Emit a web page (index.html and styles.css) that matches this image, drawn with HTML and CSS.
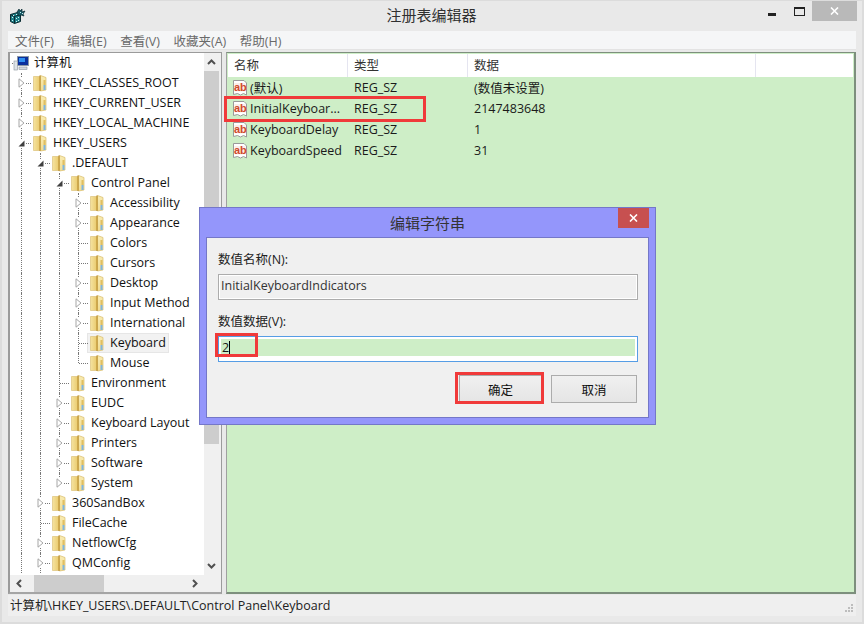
FILE: index.html
```html
<!DOCTYPE html>
<html lang="zh-CN">
<head>
<meta charset="utf-8">
<title>注册表编辑器</title>
<link rel="stylesheet" href="styles.css">
</head>
<body>
<svg class="defs" width="0" height="0">
  <defs>
    <linearGradient id="fl" x1="0" y1="0" x2="1" y2="0">
      <stop offset="0" stop-color="#f5e3a0"/>
      <stop offset="1" stop-color="#e9c868"/>
    </linearGradient>
    <linearGradient id="fr" x1="0" y1="0" x2="0" y2="1">
      <stop offset="0" stop-color="#f9ecb4"/>
      <stop offset="1" stop-color="#f2dc90"/>
    </linearGradient>
    <symbol id="folder" viewBox="0 0 14 18">
      <path d="M.5 2.500h7v14h-7z" fill="url(#fl)" stroke="#dcc37c" stroke-width=".7"/>
      <path d="M7.500 1.500l5.500 2v12.500l-5.500 1z" fill="url(#fr)" stroke="#d9bb68" stroke-width=".7"/>
      <path d="M7 1.500v15.500" stroke="#bd9234" stroke-width="1.200"/>
      <path d="M11.500 6v5" stroke="#e0bf62" stroke-width="2"/>
      <path d="M11.500 11v5" stroke="#7fb5de" stroke-width="2"/>
    </symbol>
    <symbol id="tri" viewBox="0 0 7 10">
      <path d="M1 .8L6 5 1 9.200z" fill="#fff" stroke="#a6a6a6"/>
    </symbol>
    <symbol id="down" viewBox="0 0 7 7">
      <path d="M6.500 .5v6h-6z" fill="#404040"/>
    </symbol>
    <symbol id="ab" viewBox="0 0 16 16">
      <path d="M1.500 .5H12l2.500 2.500v12l-3-1.500-3 1.500-3-1.500-4 1z" fill="#fff" stroke="#9a9a9a"/>
      <rect x="2.500" y="3" width="11" height="8.500" fill="#fbeee9"/>
    </symbol>
  </defs>
</svg>
<div class="window">
  <header class="titlebar">
    <svg class="appicon" width="16" height="16" viewBox="0 0 16 16">
      <path d="M.5 6.500l7-2 3 2v7l-6 2-4-2z" fill="#1d7f88" stroke="#0a2a30"/>
      <path d="M4.500 8.500v7M.5 6.500l4 2 6-2" fill="none" stroke="#0a2a30"/>
      <path d="M2 9h1v1H2zM2 12h1v1H2zM6 10h1v1H6zM8 9h1v1H8zM6 13h1v1H6zM8 12h1v1H8zM3 7h1v1H3zM6 6h1v1H6z" fill="#d4f3f5"/>
      <path d="M7 4l2-3 1 2 2-2 0 3 3-1-2 3 1 2-3-1-2 1z" fill="#185a66" stroke="#0a2a30" stroke-width=".7"/>
      <path d="M10 4h1v1h-1zM12 5h1v1h-1z" fill="#bfeef2"/>
    </svg>
    <span class="title">注册表编辑器</span>
    <div class="controls">
      <span class="min"></span>
      <span class="max"></span>
      <span class="close"><svg width="9" height="8" viewBox="0 0 9 8"><path d="M1 .5l7 7M8 .5l-7 7" stroke="#fff" stroke-width="1.600"/></svg></span>
    </div>
  </header>
  <nav class="menubar">
    <span>文件(F)</span><span>编辑(E)</span><span>查看(V)</span><span>收藏夹(A)</span><span>帮助(H)</span>
  </nav>
  <main class="panes">
    <section class="treepane">
      <div class="treebody">
        <div class="tree" id="tree">
          <div class="row rootrow">
            <span class="rootdots"></span>
            <svg class="pc" width="16" height="16" viewBox="0 0 16 16">
              <rect x="4.500" y="1.500" width="11" height="9" fill="#0a2f9c" stroke="#8a97a6"/>
              <rect x="6" y="3" width="6" height="4" fill="#2f8ff0"/>
              <rect x="1" y="6" width="3.500" height="9" fill="#dfe4e8" stroke="#8a939c" stroke-width=".6"/>
              <rect x="6" y="12" width="8" height="2.500" fill="#d3d9df" stroke="#8a939c" stroke-width=".6"/>
            </svg>
            <span class="label">计算机</span>
          </div>
          <div class="row"><span class="cell tri g"><svg width="7" height="10"><use href="#tri"/></svg></span><svg class="fold" width="14" height="18"><use href="#folder"/></svg><span class="label">HKEY_CLASSES_ROOT</span></div>
          <div class="row"><span class="cell tri g"><svg width="7" height="10"><use href="#tri"/></svg></span><svg class="fold" width="14" height="18"><use href="#folder"/></svg><span class="label">HKEY_CURRENT_USER</span></div>
          <div class="row"><span class="cell tri g"><svg width="7" height="10"><use href="#tri"/></svg></span><svg class="fold" width="14" height="18"><use href="#folder"/></svg><span class="label">HKEY_LOCAL_MACHINE</span></div>
          <div class="row"><span class="cell tri g"><svg width="7" height="7"><use href="#down"/></svg></span><svg class="fold" width="14" height="18"><use href="#folder"/></svg><span class="label">HKEY_USERS</span></div>
          <div class="row"><span class="cell g"></span><span class="cell tri g"><svg width="7" height="7"><use href="#down"/></svg></span><svg class="fold" width="14" height="18"><use href="#folder"/></svg><span class="label">.DEFAULT</span></div>
          <div class="row"><span class="cell g"></span><span class="cell g"></span><span class="cell tri g"><svg width="7" height="7"><use href="#down"/></svg></span><svg class="fold" width="14" height="18"><use href="#folder"/></svg><span class="label">Control Panel</span></div>
          <div class="row"><span class="cell g"></span><span class="cell g"></span><span class="cell g"></span><span class="cell tri g"><svg width="7" height="10"><use href="#tri"/></svg></span><svg class="fold" width="14" height="18"><use href="#folder"/></svg><span class="label">Accessibility</span></div>
          <div class="row"><span class="cell g"></span><span class="cell g"></span><span class="cell g"></span><span class="cell tri g"><svg width="7" height="10"><use href="#tri"/></svg></span><svg class="fold" width="14" height="18"><use href="#folder"/></svg><span class="label">Appearance</span></div>
          <div class="row"><span class="cell g"></span><span class="cell g"></span><span class="cell g"></span><span class="cell leaf g"></span><svg class="fold" width="14" height="18"><use href="#folder"/></svg><span class="label">Colors</span></div>
          <div class="row"><span class="cell g"></span><span class="cell g"></span><span class="cell g"></span><span class="cell leaf g"></span><svg class="fold" width="14" height="18"><use href="#folder"/></svg><span class="label">Cursors</span></div>
          <div class="row"><span class="cell g"></span><span class="cell g"></span><span class="cell g"></span><span class="cell tri g"><svg width="7" height="10"><use href="#tri"/></svg></span><svg class="fold" width="14" height="18"><use href="#folder"/></svg><span class="label">Desktop</span></div>
          <div class="row"><span class="cell g"></span><span class="cell g"></span><span class="cell g"></span><span class="cell tri g"><svg width="7" height="10"><use href="#tri"/></svg></span><svg class="fold" width="14" height="18"><use href="#folder"/></svg><span class="label">Input Method</span></div>
          <div class="row"><span class="cell g"></span><span class="cell g"></span><span class="cell g"></span><span class="cell tri g"><svg width="7" height="10"><use href="#tri"/></svg></span><svg class="fold" width="14" height="18"><use href="#folder"/></svg><span class="label">International</span></div>
          <div class="row"><span class="cell g"></span><span class="cell g"></span><span class="cell g"></span><span class="cell leaf g"></span><span class="selwrap"><svg class="fold" width="14" height="18"><use href="#folder"/></svg><span class="label">Keyboard</span></span></div>
          <div class="row"><span class="cell g"></span><span class="cell g"></span><span class="cell g"></span><span class="cell leaf end"></span><svg class="fold" width="14" height="18"><use href="#folder"/></svg><span class="label">Mouse</span></div>
          <div class="row"><span class="cell g"></span><span class="cell g"></span><span class="cell leaf g"></span><svg class="fold" width="14" height="18"><use href="#folder"/></svg><span class="label">Environment</span></div>
          <div class="row"><span class="cell g"></span><span class="cell g"></span><span class="cell tri g"><svg width="7" height="10"><use href="#tri"/></svg></span><svg class="fold" width="14" height="18"><use href="#folder"/></svg><span class="label">EUDC</span></div>
          <div class="row"><span class="cell g"></span><span class="cell g"></span><span class="cell tri g"><svg width="7" height="10"><use href="#tri"/></svg></span><svg class="fold" width="14" height="18"><use href="#folder"/></svg><span class="label">Keyboard Layout</span></div>
          <div class="row"><span class="cell g"></span><span class="cell g"></span><span class="cell tri g"><svg width="7" height="10"><use href="#tri"/></svg></span><svg class="fold" width="14" height="18"><use href="#folder"/></svg><span class="label">Printers</span></div>
          <div class="row"><span class="cell g"></span><span class="cell g"></span><span class="cell tri g"><svg width="7" height="10"><use href="#tri"/></svg></span><svg class="fold" width="14" height="18"><use href="#folder"/></svg><span class="label">Software</span></div>
          <div class="row"><span class="cell g"></span><span class="cell g"></span><span class="cell tri end"><svg width="7" height="10"><use href="#tri"/></svg></span><svg class="fold" width="14" height="18"><use href="#folder"/></svg><span class="label">System</span></div>
          <div class="row"><span class="cell g"></span><span class="cell tri g"><svg width="7" height="10"><use href="#tri"/></svg></span><svg class="fold" width="14" height="18"><use href="#folder"/></svg><span class="label">360SandBox</span></div>
          <div class="row"><span class="cell g"></span><span class="cell leaf g"></span><svg class="fold" width="14" height="18"><use href="#folder"/></svg><span class="label">FileCache</span></div>
          <div class="row"><span class="cell g"></span><span class="cell tri g"><svg width="7" height="10"><use href="#tri"/></svg></span><svg class="fold" width="14" height="18"><use href="#folder"/></svg><span class="label">NetflowCfg</span></div>
          <div class="row"><span class="cell g"></span><span class="cell tri g"><svg width="7" height="10"><use href="#tri"/></svg></span><svg class="fold" width="14" height="18"><use href="#folder"/></svg><span class="label">QMConfig</span></div>
        </div>
        <div class="vscroll">
          <svg class="arrow" width="9" height="6" viewBox="0 0 9 6"><path d="M1 5l3.500-3.500L8 5" fill="none" stroke="#505050" stroke-width="2"/></svg>
          <div class="vtrack"><div class="vthumb"></div></div>
          <svg class="arrow" width="9" height="6" viewBox="0 0 9 6"><path d="M1 1l3.500 3.500L8 1" fill="none" stroke="#505050" stroke-width="2"/></svg>
        </div>
      </div>
      <div class="hscroll">
        <svg class="arrow" width="6" height="9" viewBox="0 0 6 9"><path d="M5 1L1.500 4.500 5 8" fill="none" stroke="#505050" stroke-width="2"/></svg>
        <div class="htrack"><div class="hthumb"></div></div>
        <svg class="arrow" width="6" height="9" viewBox="0 0 6 9"><path d="M1 1l3.500 3.500L1 8" fill="none" stroke="#505050" stroke-width="2"/></svg>
      </div>
    </section>
    <section class="listpane">
      <div class="listhead">
        <span class="col c1">名称</span><span class="col c2">类型</span><span class="col c3">数据</span><span class="col c4"></span>
      </div>
      <div class="lrow"><span class="c1 name"><span class="ab"><svg width="16" height="16"><use href="#ab"/></svg><b>ab</b></span>(默认)</span><span class="c2">REG_SZ</span><span class="c3">(数值未设置)</span></div>
      <div class="lrow"><span class="c1 name"><span class="ab"><svg width="16" height="16"><use href="#ab"/></svg><b>ab</b></span>InitialKeyboar...</span><span class="c2">REG_SZ</span><span class="c3">2147483648</span><i class="mark markrow"></i></div>
      <div class="lrow"><span class="c1 name"><span class="ab"><svg width="16" height="16"><use href="#ab"/></svg><b>ab</b></span>KeyboardDelay</span><span class="c2">REG_SZ</span><span class="c3">1</span></div>
      <div class="lrow"><span class="c1 name"><span class="ab"><svg width="16" height="16"><use href="#ab"/></svg><b>ab</b></span>KeyboardSpeed</span><span class="c2">REG_SZ</span><span class="c3">31</span></div>
    </section>
  </main>
  <footer class="status">
    <span>计算机\HKEY_USERS\.DEFAULT\Control Panel\Keyboard</span>
    <svg class="grip" width="9" height="9" viewBox="0 0 9 9" fill="#bdbdbd"><rect x="6" width="2" height="2"/><rect x="3" y="3" width="2" height="2"/><rect x="6" y="3" width="2" height="2"/><rect y="6" width="2" height="2"/><rect x="3" y="6" width="2" height="2"/><rect x="6" y="6" width="2" height="2"/></svg>
  </footer>
</div>

<div class="dialog">
  <div class="dtitle">
    <span>编辑字符串</span>
    <span class="dclose"><svg width="9" height="8" viewBox="0 0 9 8"><path d="M1 .5l7 7M8 .5l-7 7" stroke="#fff" stroke-width="1.600"/></svg></span>
  </div>
  <div class="dbody">
    <div class="flabel">数值名称(N):</div>
    <div class="field readonly">InitialKeyboardIndicators</div>
    <div class="flabel second">数值数据(V):</div>
    <div class="field active"><div class="fill">2<i class="caret"></i></div><i class="mark markval"></i></div>
    <div class="buttons">
      <button class="btn ok" type="button">确定<i class="mark markok"></i></button>
      <button class="btn" type="button">取消</button>
    </div>
  </div>
</div>
</body>
</html>
```

FILE: styles.css
```css
* { box-sizing: border-box; }
html, body { margin: 0; padding: 0; width: 864px; height: 624px; overflow: hidden; }
body {
  background: #e9e9e9;
  font-family: "Open Sans", "Noto Sans CJK SC", sans-serif;
  font-size: 12.5px;
  color: #1a1a1a;
  position: relative;
}
.defs { position: absolute; }

.window {
  width: 864px;
  height: 624px;
  background: #e9e9e9;
  border: 2px solid #dcdcdc;
  border-top-width: 1px;
  display: flex;
  flex-direction: column;
}

.titlebar { height: 29px; flex: none; position: relative; display: flex; align-items: center; justify-content: center; }
.appicon { position: absolute; left: 8px; top: 7px; }
.title { font-size: 15px; color: #303030; margin-top: -3px; margin-left: -1px; }
.controls { position: absolute; right: 5px; top: 0; display: flex; align-items: flex-start; }
.min { width: 8px; height: 3px; background: #222; margin-top: 12px; }
.max { width: 11px; height: 9px; border: 1px solid #222; border-top-width: 2px; margin: 6px 0 0 18px; }
.close { width: 45px; height: 20px; background: #b9b9b9; margin-left: 7px; display: flex; align-items: center; justify-content: center; }

.menubar { height: 19px; margin: 1px 6px 0 6px; flex: none; background: #f5f6f7; display: flex; align-items: center; padding-left: 7px; gap: 13.5px; color: #6a6a6a; border-bottom: 1px solid #e3e3e3; }
.menubar span { font-size: 12.5px; }

.panes { flex: 1; display: flex; margin: 2px 6px 0 6px; gap: 4px; min-height: 0; }

.treepane { width: 214px; border: 2px solid #9b9b9b; border-top-width: 1px; border-right-width: 1px; background: #fff; display: flex; flex-direction: column; flex: none; border-bottom-color: #a5a5a5; }
.treebody { flex: 1; display: flex; min-height: 0; background: #f0f0f0; padding-right: 2px; }
.tree { flex: 1; overflow: hidden; min-width: 0; padding-left: 2px; background: #fff; }
.row { height: 20px; display: flex; align-items: center; white-space: nowrap; }
.rootrow { position: relative; }
.rootdots { width: 1px; height: 0; border-top: 1px dotted #777; }
.pc { flex: none; }
.cell { width: 19px; height: 20px; flex: none; position: relative; display: flex; align-items: center; justify-content: center; }
.cell > svg { position: relative; z-index: 1; background: #fff; margin-left: -1px; }
.g::before { content: ""; position: absolute; left: 9px; top: 0; bottom: 0; border-left: 1px dotted #777; }
.end::before { content: ""; position: absolute; left: 9px; top: 0; height: 10px; border-left: 1px dotted #777; }
.tri::after, .leaf::after { content: ""; position: absolute; left: 10px; right: 0; top: 10px; border-top: 1px dotted #777; }
.fold { flex: none; margin-left: 2px; margin-right: 1px; }
.label { padding: 0 3px; margin-left: 2px; color: #111; line-height: 18px; }
.selwrap { display: flex; align-items: center; height: 20px; margin-left: -1px; padding-left: 1px; background: #f2f2f2; box-shadow: inset 0 0 0 1px #e6e6e6; }

.vscroll { width: 15px; flex: none; background: #f0f0f0; display: flex; flex-direction: column; align-items: center; }
.vscroll .arrow { flex: none; margin: 6px 0; }
.vtrack { flex: 1; width: 100%; position: relative; }
.vthumb { height: 373px; background: #cdcdcd; }
.hscroll { height: 17px; flex: none; background: #f0f0f0; display: flex; align-items: center; padding-right: 17px; }
.hscroll .arrow { flex: none; margin: 0 6px; }
.htrack { flex: 1; height: 100%; }
.hthumb { width: 70px; height: 100%; margin-left: 6px; background: #cdcdcd; }

.listpane { flex: 1; border: 2px solid #7d8f7d; border-top: 1px solid #7d8f7d; border-left: 1px solid #a0a0a0; background: #ceeec7; position: relative; min-width: 0; }
.listhead { display: flex; height: 23px; background: #fff; margin: 1px 1px 0 1px; }
.col { height: 100%; border-right: 1px solid #e5e5f0; padding-left: 6px; line-height: 23px; flex: none; color: #333; }
.listhead .c1 { width: 120px; }
.listhead .c2 { width: 120px; }
.listhead .c3 { width: 288px; }
.listhead .c4 { border-right: 0; }
.lrow { height: 21px; display: flex; align-items: center; position: relative; white-space: nowrap; padding-left: 5px; }
.lrow .c1 { width: 122px; display: flex; align-items: center; flex: none; }
.lrow .c2 { width: 120px; flex: none; }
.ab { position: relative; width: 16px; height: 16px; margin-right: 2px; flex: none; }
.ab svg { display: block; }
.ab b { position: absolute; left: 2px; top: -1px; font: bold 11px/16px "Liberation Sans", sans-serif; color: #cf4a2c; }

.mark { position: absolute; border: 3px solid #f03a3a; pointer-events: none; display: block; }
.markrow { left: -3px; top: -2px; width: 202px; height: 26px; }

.status { height: 21px; flex: none; margin: 1px 6px 6px 6px; padding: 0 0 2px 2px; display: flex; align-items: center; justify-content: space-between; background: #efefef; color: #222; }
.grip { margin-right: 2px; margin-top: 8px; }

.dialog {
  position: absolute;
  left: 199px;
  top: 207px;
  width: 457px;
  height: 218px;
  background: #9496fb;
  border: 1px solid #7477c8;
  padding: 29px 6px 6px;
}
.dtitle { position: absolute; left: 0; right: 0; top: 0; height: 30px; text-align: center; font-size: 15px; color: #333; line-height: 30px; }
.dclose { position: absolute; right: 6px; top: 0; width: 31px; height: 20px; background: #c75050; display: flex; align-items: center; justify-content: center; }
.dbody { height: 100%; background: #f0f0f0; border: 1px solid #7477c8; padding: 12px 10px 0 11px; position: relative; }
.flabel { height: 20px; line-height: 20px; color: #222; margin-bottom: 4px; }
.flabel.second { margin-top: 12px; }
.field { height: 26px; position: relative; }
.readonly { border: 1px solid #acacac; background: #f0f0f0; box-shadow: inset 0 0 0 1px #fff; line-height: 22px; padding-left: 2px; color: #333; }
.active { border: 1px solid #569de5; background: #fff; padding: 2px; }
.fill { height: 17px; background: #ceeec7; line-height: 17px; padding-left: 1px; white-space: nowrap; }
.caret { display: inline-block; width: 1px; height: 14px; background: #000; vertical-align: -3px; }
.markval { left: -4px; top: -4px; width: 43px; height: 24px; }
.buttons { display: flex; justify-content: flex-end; gap: 7px; margin-top: 13px; padding-right: 1px; }
.btn { position: relative; width: 86px; height: 28px; border: 1px solid #acacac; background: linear-gradient(#f0f0f0, #e5e5e5); font: inherit; color: #111; padding: 0; }
.ok { width: 85px; padding-right: 2px; }
.markok { left: -5px; top: -4px; width: 89px; height: 32px; }
```
